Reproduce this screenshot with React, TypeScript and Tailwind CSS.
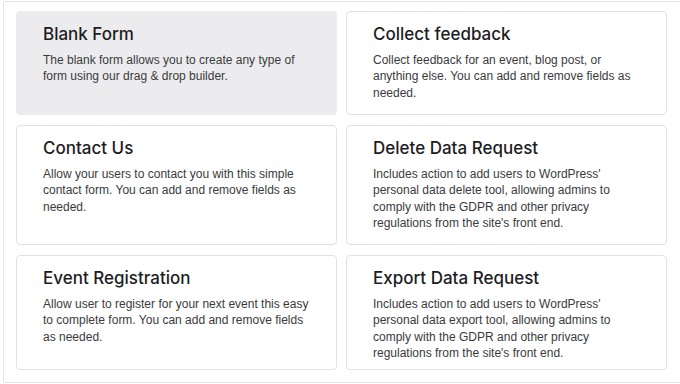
import * as React from "react"

const templates = [
  {
    title: "Blank Form",
    text: "The blank form allows you to create any type of form using our drag & drop builder.",
    active: true,
  },
  {
    title: "Collect feedback",
    text: "Collect feedback for an event, blog post, or anything else. You can add and remove fields as needed.",
  },
  {
    title: "Contact Us",
    text: "Allow your users to contact you with this simple contact form. You can add and remove fields as needed.",
  },
  {
    title: "Delete Data Request",
    text: "Includes action to add users to WordPress' personal data delete tool, allowing admins to comply with the GDPR and other privacy regulations from the site's front end.",
  },
  {
    title: "Event Registration",
    text: "Allow user to register for your next event this easy to complete form. You can add and remove fields as needed.",
  },
  {
    title: "Export Data Request",
    text: "Includes action to add users to WordPress' personal data export tool, allowing admins to comply with the GDPR and other privacy regulations from the site's front end.",
  },
]

export default function App() {
  return (
    <div
      className="h-[384px] w-[680px] overflow-hidden bg-white"
      style={{ fontFamily: "Inter, 'Liberation Sans', sans-serif" }}
    >
      <div className="ml-[3px] mt-[1px] h-[382px] w-[700px] border border-[#e6e6e6] pl-[12px] pt-[9px]">
        <div className="grid grid-cols-[321px_321px] grid-rows-[104px_120px_115px] gap-x-[9px] gap-y-[10px]">
          {templates.map((t) => (
            <div
              key={t.title}
              className={
                t.active
                  ? "rounded-[4px] border border-[#ececee] bg-[#ececee] px-[26px] pt-[10px]"
                  : "rounded-[4px] border border-[#e2e2e4] bg-white px-[26px] pt-[10px]"
              }
            >
              <h3 className="text-[17px] font-medium leading-[24px] text-[#1d1d1f]">{t.title}</h3>
              <p className="mt-[6px] font-['Liberation_Sans',sans-serif] text-[12px] leading-[16.3px] text-[#3a3a3c]">
                {t.text}
              </p>
            </div>
          ))}
        </div>
      </div>
    </div>
  )
}
